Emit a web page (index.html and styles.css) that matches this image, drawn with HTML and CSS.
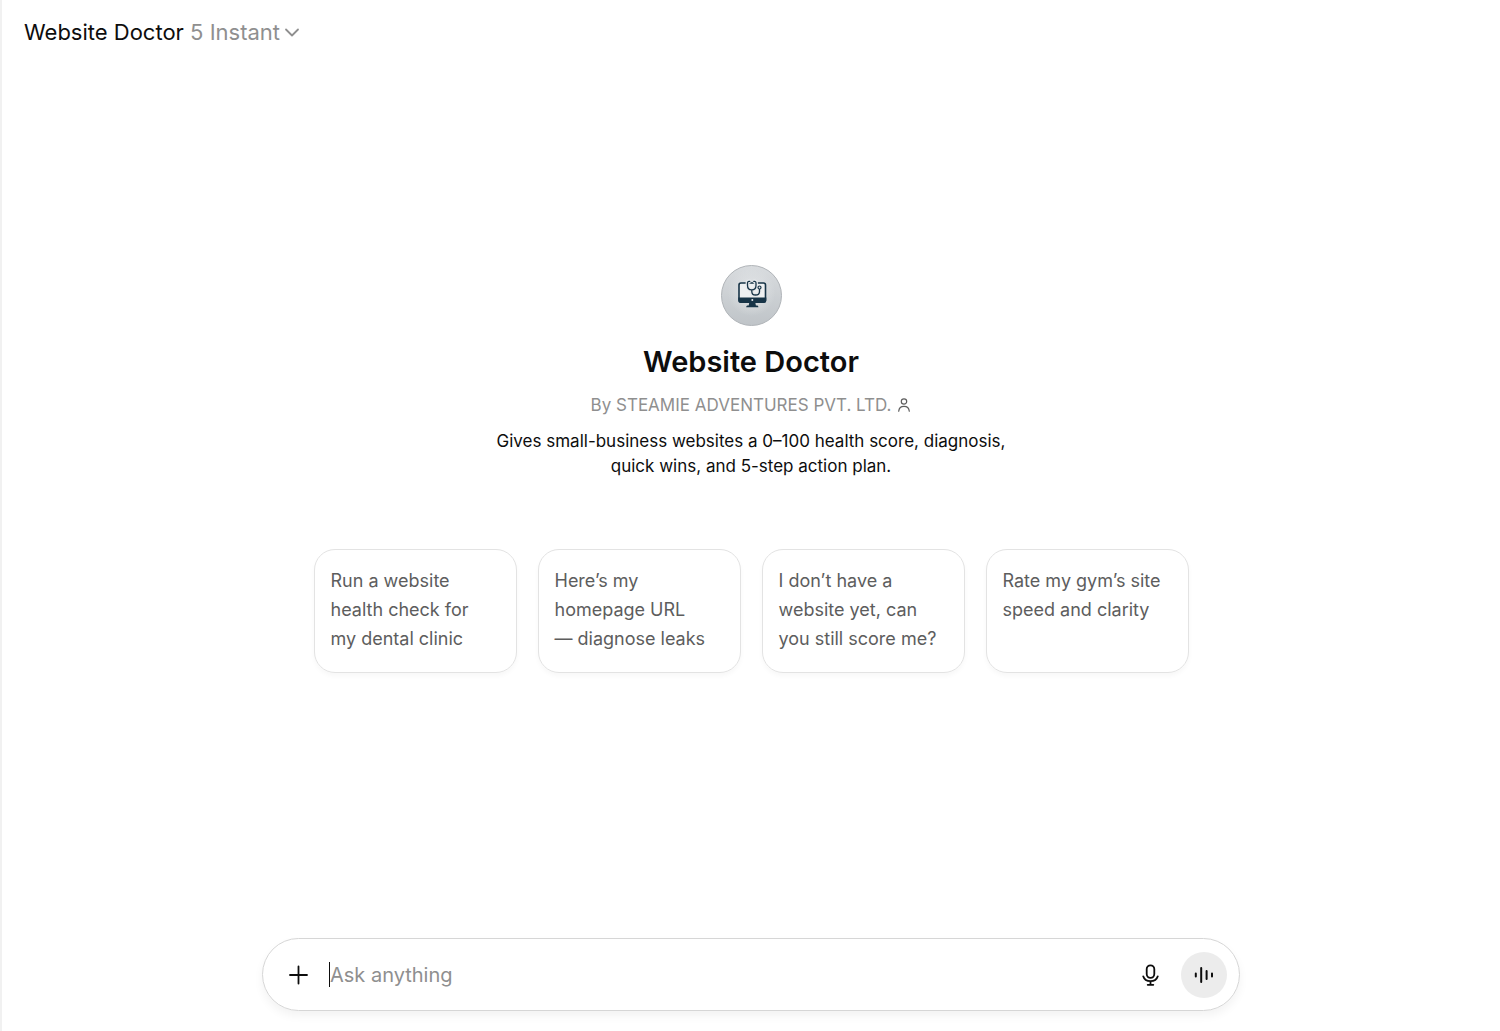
FILE: index.html
```
<!DOCTYPE html>
<html lang="en">

<head>
    <meta charset="UTF-8">
    <meta name="viewport" content="width=device-width, initial-scale=1.0">
    <title>Website Doctor</title>
    <link rel="stylesheet" href="styles.css">
</head>

<body>
    <header class="topbar">
        <button type="button" class="model-button">
            <span>Website Doctor <span class="model-name">5 Instant</span></span>
            <svg class="chevron" width="16" height="16" viewBox="0 0 16 16" fill="none" stroke="currentColor" stroke-width="1.800" stroke-linecap="round" stroke-linejoin="round" aria-hidden="true">
                <path d="M2 5.500l6 6 6-6" />
            </svg>
        </button>
    </header>

    <main class="hero">
        <svg class="avatar" viewBox="0 0 61 61" role="img" aria-label="Website Doctor logo">
            <defs>
                <linearGradient id="avatarFill" x1="0" y1="0" x2="0" y2="1">
                    <stop offset="0" stop-color="#d9dcdf" />
                    <stop offset="1" stop-color="#bfc4c8" />
                </linearGradient>
                <radialGradient id="avatarGlow">
                    <stop offset="0" stop-color="#e3e6e8" />
                    <stop offset="1" stop-color="#e3e6e8" stop-opacity="0" />
                </radialGradient>
            </defs>
            <circle cx="30.5" cy="30.5" r="30" fill="url(#avatarFill)" stroke="#b0b4b8" />
            <circle cx="30.5" cy="27" r="24" fill="url(#avatarGlow)" />
            <!-- monitor -->
            <rect x="18" y="18" width="26.500" height="19" rx="2" fill="#eef0f1" stroke="#173447" stroke-width="1.600" />
            <path d="M17.300 32.500h28v3.200a2.300 2.300 0 0 1-2.300 2.300H19.600a2.300 2.300 0 0 1-2.300-2.300z" fill="#173447" />
            <circle cx="31.300" cy="35" r="1" fill="#e6e9eb" />
            <path d="M28.200 38h6.200l.5 2.500h1.300q1.200.2 1.200 1.800H25.200q0-1.600 1.200-1.800h1.300z" fill="#173447" />
            <!-- stethoscope -->
            <path d="M29.500 16.300h-1.700q-1.300.2-1.300 1.500v2.500c0 2.700 1.700 4.600 4.200 4.600s4.300-1.900 4.300-4.600v-2.500q0-1.300-1.300-1.500h-1.500M30.800 25v1.400c0 2.300 1.500 3.600 3.700 3.600s4-1.400 4-3.600v-2.300" fill="none" stroke="#e6e9eb" stroke-width="3.800" />
            <path d="M28.800 16.300h-1q-1.300.2-1.300 1.500v2.500c0 2.700 1.700 4.600 4.200 4.600s4.300-1.900 4.300-4.600v-2.500q0-1.300-1.300-1.500h-1M30.800 25v1.400c0 2.300 1.500 3.600 3.700 3.600s4-1.400 4-3.600v-2.300" fill="none" stroke="#173447" stroke-width="1.300" stroke-linecap="round" />
            <circle cx="38.500" cy="22.500" r="1.500" fill="#e0e3e5" stroke="#173447" stroke-width="1.200" />
        </svg>

        <h1>Website Doctor</h1>

        <p class="author">
            By STEAMIE ADVENTURES PVT. LTD.
            <svg width="14" height="14" viewBox="0 0 14 14" fill="none" stroke="currentColor" stroke-width="1.2" stroke-linecap="round" aria-hidden="true">
                <circle cx="7" cy="3.500" r="2.700" />
                <path d="M1.700 13.200c.3-3 2.500-4.800 5.300-4.800s5 1.800 5.300 4.800" />
            </svg>
        </p>

        <p class="description">Gives small-business websites a 0–100 health score, diagnosis, quick wins, and 5-step action plan.</p>

        <div class="starters">
            <button type="button" class="starter">Run a website health check for my&nbsp;dental clinic</button>
            <button type="button" class="starter">Here’s my homepage URL —&nbsp;diagnose leaks</button>
            <button type="button" class="starter">I don’t have a website yet, can you still score me?</button>
            <button type="button" class="starter">Rate my gym’s site speed and clarity</button>
        </div>
    </main>

    <form class="composer">
        <button type="button" class="icon-button" aria-label="Add files">
            <svg width="24" height="24" viewBox="0 0 24 24" fill="none" stroke="currentColor" stroke-width="1.800" stroke-linecap="round" aria-hidden="true">
                <path d="M12.500 3.500v17M4 12h17" />
            </svg>
        </button>
        <input type="text" class="prompt" placeholder="Ask anything" aria-label="Ask anything">
        <button type="button" class="icon-button" aria-label="Dictate">
            <svg width="24" height="24" viewBox="0 0 24 24" fill="none" stroke="currentColor" stroke-width="1.800" stroke-linecap="round" aria-hidden="true">
                <rect x="7.700" y="2.300" width="7.600" height="12.600" rx="3.800" />
                <path d="M4.200 13.300c.9 2.900 3.600 4.900 7.300 4.900s6.400-2 7.300-4.900M11.500 18.200v3.600M8.700 21.800h5.600" />
            </svg>
        </button>
        <button type="button" class="icon-button voice" aria-label="Use voice mode">
            <svg width="24" height="24" viewBox="0 0 24 24" fill="none" stroke="currentColor" stroke-width="2" stroke-linecap="round" aria-hidden="true">
                <path d="M3.800 10.400v3.200M9.200 5v14M14.600 8v8M20 10.400v3.200" />
            </svg>
        </button>
    </form>
</body>

</html>
```

FILE: styles.css
```
* {
    box-sizing: border-box;
}

body {
    display: flex;
    flex-direction: column;
    min-height: 100vh;
    margin: 0;
    border-left: 2px solid #f1f1f1;
    background-color: #ffffff;
    color: #0d0d0d;
    font-family: Inter, "Liberation Sans", sans-serif;
}

button,
input {
    padding: 0;
    border: none;
    background: none;
    color: inherit;
    font-family: inherit;
}

button {
    cursor: pointer;
}

.topbar {
    display: flex;
    align-items: center;
    height: 64px;
    padding: 0 22px;
}

.model-button {
    display: flex;
    align-items: center;
    gap: 4px;
    font-size: 22px;
}

.model-name,
.chevron {
    color: #8f8f8f;
}

.hero {
    flex: 1;
    display: flex;
    flex-direction: column;
    align-items: center;
    justify-content: center;
    padding: 0 20px 64px;
}

.avatar {
    width: 61px;
    height: 61px;
}

h1 {
    margin: 16px 0 0;
    font-size: 29px;
    font-weight: 600;
    line-height: 40px;
}

.author {
    display: flex;
    align-items: center;
    gap: 6px;
    margin: 11px 0 0;
    color: #8f8f8f;
    font-size: 17px;
    line-height: 24px;
}

.author svg {
    color: #5d5d5d;
}

.description {
    max-width: 540px;
    margin: 12px 0 0;
    font-size: 17px;
    line-height: 25px;
    text-align: center;
}

.starters {
    display: grid;
    grid-template-columns: repeat(4, 1fr);
    gap: 21px;
    width: 100%;
    max-width: 875px;
    margin-top: 70px;
}

.starter {
    display: flex;
    align-items: flex-start;
    min-height: 124px;
    padding: 16px;
    border: 1px solid #e3e3e3;
    border-radius: 21px;
    box-shadow: 0 3px 5px rgba(0, 0, 0, 0.03);
    color: #5d5d5d;
    font-size: 18px;
    line-height: 29px;
    text-align: left;
}

.composer {
    display: flex;
    align-items: center;
    align-self: center;
    width: calc(100% - 40px);
    max-width: 978px;
    height: 73px;
    margin-bottom: 20px;
    padding: 0 12px;
    border: 1px solid #d6d6d6;
    border-radius: 37px;
    box-shadow: 0 5px 10px rgba(0, 0, 0, 0.05);
}

.icon-button {
    display: flex;
    align-items: center;
    justify-content: center;
    width: 46px;
    height: 46px;
    border-radius: 50%;
}

.prompt {
    flex: 1;
    min-width: 0;
    height: 25px;
    margin: 0 8px;
    border-left: 1px solid #0d0d0d;
    outline: none;
    font-size: 20px;
}

.prompt::placeholder {
    color: #8f8f8f;
}

.voice {
    margin-left: 7px;
    background-color: #ececec;
}
```
